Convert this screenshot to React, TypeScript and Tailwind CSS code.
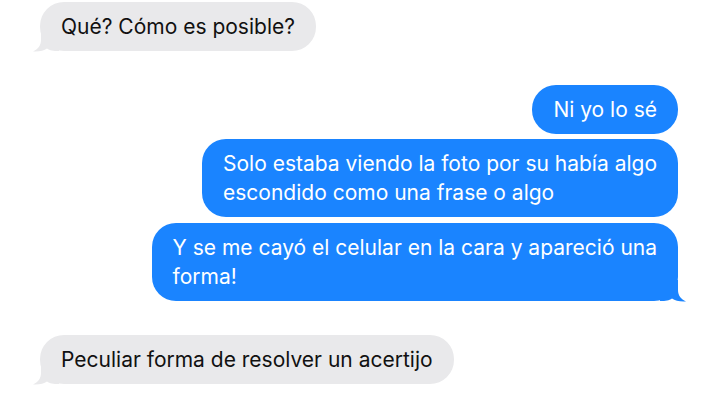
import React from "react";

type Side = "in" | "out";

interface Msg {
  side: Side;
  lines: string[];
  tail?: boolean;
  gap: string;
}

const messages: Msg[] = [
  { side: "in", lines: ["Qué? Cómo es posible?"], tail: true, gap: "mt-[2px]" },
  { side: "out", lines: ["Ni yo lo sé"], gap: "mt-[34px]" },
  {
    side: "out",
    lines: ["Solo estaba viendo la foto por su había algo", "escondido como una frase o algo"],
    gap: "mt-[5px]",
  },
  {
    side: "out",
    lines: ["Y se me cayó el celular en la cara y apareció una", "forma!"],
    tail: true,
    gap: "mt-[6px]",
  },
  { side: "in", lines: ["Peculiar forma de resolver un acertijo"], tail: true, gap: "mt-[34px]" },
];

function Tail({ side }: { side: Side }) {
  const pos = side === "in" ? "left-[-7px]" : "right-[-8px] -scale-x-100";
  const fill = side === "in" ? "#e9e9eb" : "#1a84ff";
  return (
    <svg
      className={`absolute bottom-[-1px] ${pos}`}
      width="26"
      height="22"
      viewBox="0 0 26 22"
    >
      <path
        d="M8 0 V10 C8 15.5 5 19 0 21.5 C6 22 11 20.5 14 18.5 C17 20.5 20 21 26 21 V0 Z"
        fill={fill}
      />
    </svg>
  );
}

function Bubble({ msg }: { msg: Msg }) {
  const isIn = msg.side === "in";
  return (
    <div className={`flex ${isIn ? "justify-start pl-10" : "justify-end pr-[42px]"} ${msg.gap}`}>
      <div
        className={`relative rounded-[24px] px-[21px] py-[10px] text-[21px] leading-[29px] ${
          isIn ? "bg-[#e9e9eb] text-[#111]" : "bg-[#1a84ff] text-white"
        }`}
      >
        {msg.tail && <Tail side={msg.side} />}
        <p className="relative whitespace-nowrap">
          {msg.lines.map((l, i) => (
            <React.Fragment key={i}>
              {i > 0 && <br />}
              {l}
            </React.Fragment>
          ))}
        </p>
      </div>
    </div>
  );
}

export default function App() {
  return (
    <div
      className="w-[720px] h-[406px] overflow-hidden bg-white flex flex-col"
      style={{ fontFamily: "Inter, 'Noto Sans', sans-serif" }}
    >
      {messages.map((m, i) => (
        <Bubble key={i} msg={m} />
      ))}
    </div>
  );
}
